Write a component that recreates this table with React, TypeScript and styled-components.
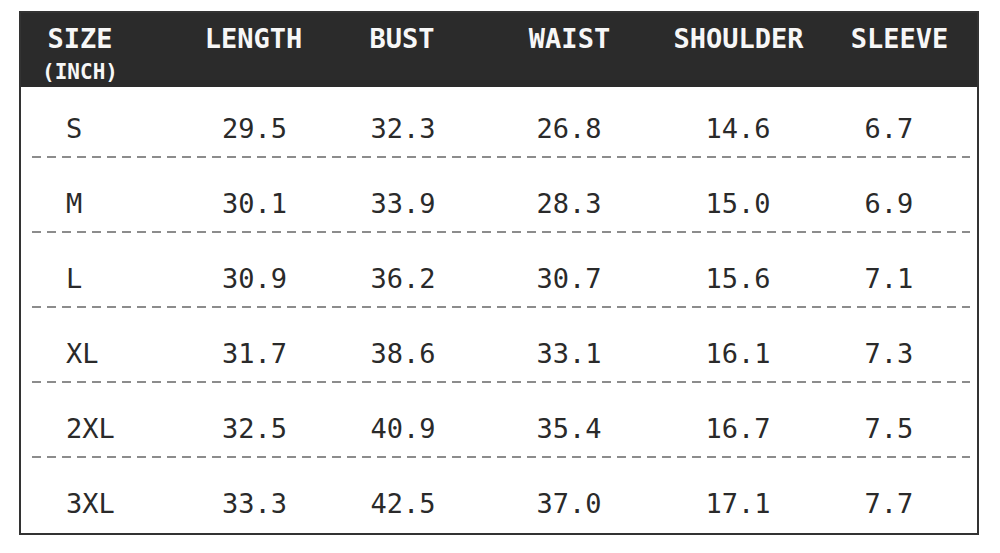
import React from "react";
import styled, { createGlobalStyle } from "styled-components";

const GlobalStyle = createGlobalStyle`
  html, body {
    margin: 0;
    padding: 0;
    background: #ffffff;
  }
  * { box-sizing: border-box; }
`;

const TRACKS = "150px 167px 130px 202px 136px 166px";

const Page = styled.div`
  width: 1000px;
  height: 553px;
  padding: 11px 0 0 19px;
  background: #ffffff;
  font-family: "DejaVu Sans Mono", "Liberation Mono", monospace;
`;

const Table = styled.div`
  width: 960px;
  height: 524px;
  border: 2px solid #333333;
  display: flex;
  flex-direction: column;
`;

const Header = styled.div`
  height: 74px;
  background: #2b2b2b;
  color: #f7f7f7;
  display: grid;
  grid-template-columns: ${TRACKS};
  align-items: start;
  padding-top: 11px;
`;

const HeadCell = styled.div<{ $padL?: number; $padR?: number }>`
  display: flex;
  flex-direction: column;
  align-items: center;
  padding-left: ${(p) => p.$padL ?? 0}px;
  padding-right: ${(p) => p.$padR ?? 0}px;
`;

const HeadLabel = styled.span`
  font-size: 27px;
  line-height: 30px;
  font-weight: 700;
  white-space: nowrap;
`;

const HeadSub = styled.span`
  margin-top: 7px;
  font-size: 21px;
  line-height: 22px;
  font-weight: 700;
  white-space: nowrap;
`;

const Body = styled.div`
  flex: 1;
  display: flex;
  flex-direction: column;
  background: #ffffff;
`;

const Row = styled.div<{ $last?: boolean }>`
  height: ${(p) => (p.$last ? 69 : 75)}px;
  padding-top: 27px;
  display: flex;
  flex-direction: column;
`;

const Line = styled.div`
  display: grid;
  grid-template-columns: ${TRACKS};
  height: 30px;
  align-items: center;
`;

const Cell = styled.span<{ $left?: boolean }>`
  font-size: 27px;
  line-height: 30px;
  color: #2a2a2a;
  white-space: nowrap;
  text-align: ${(p) => (p.$left ? "left" : "center")};
  padding-left: ${(p) => (p.$left ? 45 : 0)}px;
`;

const Divider = styled.div`
  margin: 12px 7px 0 11px;
  height: 2px;
  background: repeating-linear-gradient(
    to right,
    #8c8c8c 0px,
    #8c8c8c 9px,
    transparent 9px,
    transparent 15px
  );
`;

const rows: string[][] = [
  ["S", "29.5", "32.3", "26.8", "14.6", "6.7"],
  ["M", "30.1", "33.9", "28.3", "15.0", "6.9"],
  ["L", "30.9", "36.2", "30.7", "15.6", "7.1"],
  ["XL", "31.7", "38.6", "33.1", "16.1", "7.3"],
  ["2XL", "32.5", "40.9", "35.4", "16.7", "7.5"],
  ["3XL", "33.3", "42.5", "37.0", "17.1", "7.7"],
];

export default function App() {
  return (
    <>
      <GlobalStyle />
      <Page>
        <Table>
          <Header>
            <HeadCell $padR={32}>
              <HeadLabel>SIZE</HeadLabel>
              <HeadSub>(INCH)</HeadSub>
            </HeadCell>
            <HeadCell $padR={2}>
              <HeadLabel>LENGTH</HeadLabel>
            </HeadCell>
            <HeadCell $padR={2}>
              <HeadLabel>BUST</HeadLabel>
            </HeadCell>
            <HeadCell $padL={1}>
              <HeadLabel>WAIST</HeadLabel>
            </HeadCell>
            <HeadCell $padL={1}>
              <HeadLabel>SHOULDER</HeadLabel>
            </HeadCell>
            <HeadCell $padL={21}>
              <HeadLabel>SLEEVE</HeadLabel>
            </HeadCell>
          </Header>
          <Body>
            {rows.map((r, i) => {
              const last = i === rows.length - 1;
              return (
                <Row key={r[0]} $last={last}>
                  <Line>
                    {r.map((v, j) => (
                      <Cell key={j} $left={j === 0}>
                        {v}
                      </Cell>
                    ))}
                  </Line>
                  {!last && <Divider />}
                </Row>
              );
            })}
          </Body>
        </Table>
      </Page>
    </>
  );
}
